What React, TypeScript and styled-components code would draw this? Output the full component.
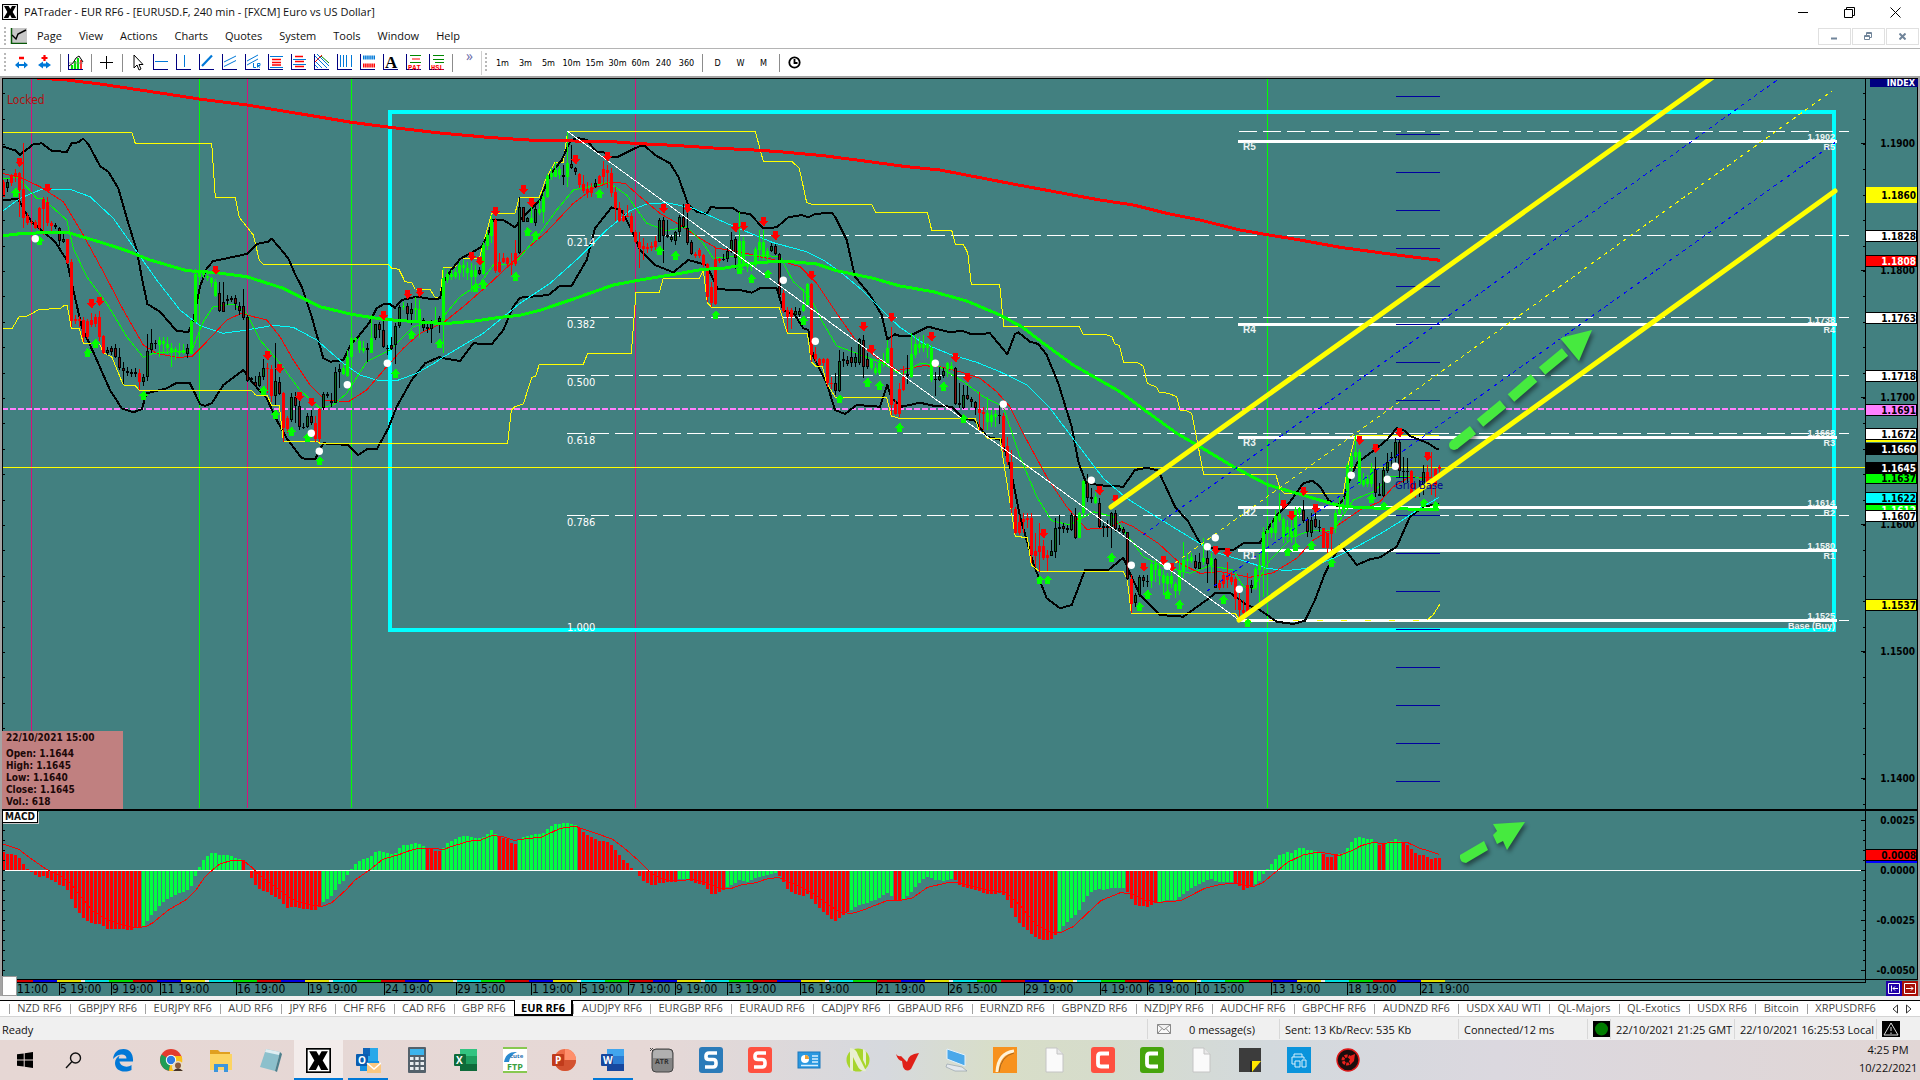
import React from "react";
import styled, { createGlobalStyle } from "styled-components";

/* ------------------------------------------------------------------ */
/* Theme                                                               */
/* ------------------------------------------------------------------ */

const UI = '"Open Sans", "Noto Sans", sans-serif';
const CHART = '"DejaVu Sans Condensed", "DejaVu Sans", sans-serif';
const TEAL = "#428080";

const GlobalStyle = createGlobalStyle`
  * { box-sizing: border-box; }
  body { margin: 0; background: #fff; font-family: ${UI}; font-size: 11px; color: #111; }
  button { font: inherit; color: inherit; background: none; border: 0; padding: 0; margin: 0; }
  svg { display: block; }
`;

/* ------------------------------------------------------------------ */
/* Chart data. Points are kept in thirds of a pixel from the origin    */
/* of the block they belong to.                                        */
/* ------------------------------------------------------------------ */

type Block = [number, number, string];

const toPoints = (blocks: Block[]) =>
  blocks
    .map(([ox, oy, pts]) =>
      pts
        .trim()
        .split(/\s+/)
        .map((p) => {
          const [x, y] = p.split(",").map(Number);
          return `${(ox + x / 3).toFixed(1)},${(oy + y / 3).toFixed(1)}`;
        })
        .join(" ")
    )
    .join(" ");

const slowRed = toPoints([
  [0, 80, "110,-6 200,0 300,12 400,27 500,42 598,57 740,75 850,93 1000,118 1054,127 1170,142 1320,159 1430,169"],
  [440, 80, "140,172 280,181 400,183 500,184 600,191 700,196 820,204 960,211 1040,217 1150,227 1280,244 1400,260 1500,270"],
  [900, 200, "350,-46 480,-22 600,0 700,15 800,40 900,60 1020,90 1102,104 1200,120 1320,142 1440,158 1530,170 1620,181"],
]);

const slowGreen = toPoints([
  [0, 80, "10,467 60,461 130,458 205,458 300,486 380,512 450,540 560,572 640,577 740,590 850,625 960,680 1054,703 1150,718 1250,725"],
  [440, 80, "10,731 100,724 180,712 240,706 300,691 400,657 520,615 600,600 720,580 790,568 850,565 950,548 1030,543 1130,552 1190,572 1300,595"],
  [900, 200, "0,258 100,275 200,303 300,345 370,383 430,430 520,495 660,575 720,620 830,700 900,740 1000,800 1102,854 1200,883 1300,912 1340,920 1440,925 1525,927 1618,927"],
]);

const bandUpper = toPoints([
  [0, 80, "10,200 48,212 60,224 100,193 125,190 155,212 200,216 215,190 235,187 250,176 265,192 300,258 325,275 355,325 385,430 410,510 425,590 442,672 480,695 530,753 565,756 580,720 600,620 620,565 640,543 680,535 740,522 770,492 805,485 815,476 840,505 865,535 885,582 905,620 935,710 970,835 992,845 1030,840 1054,790 1075,770 1110,725 1130,685 1150,673 1170,673 1185,683 1205,660 1250,650 1300,658 1320,655"],
  [440, 80, "10,610 30,575 60,537 100,515 125,500 145,460 160,420 190,420 225,442 245,415 260,400 300,360 330,285 365,240 390,185 410,173 440,180 470,217 490,216 510,230 535,230 570,212 600,198 615,198 645,225 690,250 715,290 745,375 770,395 800,402 812,382 880,385 900,398 930,402 970,445 1010,442 1045,412 1085,405 1105,412 1125,402 1175,398 1185,410 1220,480 1245,590 1290,645 1325,705 1342,778 1365,763"],
  [900, 200, "0,408 30,407 85,380 150,397 185,392 215,403 270,400 322,463 345,402 355,397 390,425 415,432 440,465 475,550 515,680 535,785 558,848 600,856 670,860 705,810 740,803 775,812 825,920 865,965 900,1030 940,1045 1000,1050 1030,1030 1080,1028 1095,1000 1130,945 1170,905 1210,850 1237,842 1260,860 1285,900 1310,918 1330,900 1345,850 1370,790 1430,745 1460,720 1490,685 1515,692 1530,708 1585,730 1610,747 1618,747"],
]);

const bandLower = toPoints([
  [0, 80, "10,360 55,357 75,395 95,425 130,455 165,485 200,540 220,630 245,740 285,828 330,930 365,985 400,997 425,988 440,940 500,925 530,908 570,910 600,972 615,978 635,970 670,915 730,870 755,905 800,955 830,1020 860,1075 905,1135 945,1138 970,1090 1045,1095 1075,1125 1100,1108 1130,1108 1165,1045 1190,980 1235,900 1275,850 1320,830"],
  [440, 80, "0,833 60,843 100,790 155,793 190,750 220,680 240,653 325,645 360,617 395,617 440,540 465,445 515,382 545,392 575,450 600,510 645,555 700,577 745,540 800,555 825,610 835,628 900,630 935,638 960,625 1010,625 1030,690 1065,705 1090,745 1105,750 1120,830 1160,910 1185,990 1215,1002 1250,975 1320,980 1342,915 1355,955 1385,980"],
  [900, 200, "60,608 100,617 155,620 190,655 225,662 260,710 305,720 330,800 360,950 400,1090 440,1195 480,1225 515,1215 555,1110 625,1110 670,1073 690,1120 720,1185 780,1245 850,1250 920,1200 945,1180 990,1178 1040,1215 1080,1230 1130,1265 1180,1272 1215,1262 1245,1200 1275,1120 1320,1035 1340,1055 1370,1095 1410,1078 1440,1072 1490,1040 1530,950 1570,920 1618,912"],
]);

const channelHigh = toPoints([
  [0, 80, "10,157 395,157 406,190 635,190 646,352 706,352 718,412 760,465 778,540 790,553 1165,553 1175,565 1197,568 1215,605 1235,608 1245,627 1290,628 1305,652 1320,652"],
  [440, 80, "10,562 45,562 60,535 118,535 155,400 225,400 238,352 298,352 320,290 345,247 370,247 383,154 946,154 970,244 1055,244 1078,265 1100,368 1115,373 1295,373 1307,397"],
  [900, 200, "82,37 95,91 155,91 166,133 190,133 203,158 214,253 299,253 311,379 538,379 550,403 615,403 635,410 645,432 658,436 671,487 710,487 730,498 742,550 770,562 778,577 805,580 830,590 840,630 860,632 875,640 911,823 1127,823 1140,865 1152,880 1330,880 1343,800 1366,707 1618,706"],
]);

const channelLow = toPoints([
  [0, 80, "10,745 37,745 58,709 82,708 118,688 180,686 192,677 202,677 214,745 238,745 250,790 298,790 310,818 335,830 370,915 406,917 418,931 755,931 766,945 802,947 815,977 838,977 850,1083 950,1083 960,1090"],
  [440, 80, "203,1090 214,990 225,980 250,972 275,893 287,888 298,853 430,853 443,820 574,820 588,637 658,637 670,595 778,595 790,570 802,668 815,682 1018,682 1042,760 1102,760 1114,845 1126,858 1147,860 1160,910 1186,952 1340,952 1354,1008 1378,1015"],
  [900, 200, "226,655 238,695 250,698 262,715 300,715 346,1010 382,1012 394,1095 418,1114 670,1114 682,1140 694,1240 1006,1240 1018,1262"],
]);

const cyanAverage = toPoints([
  [0, 80, "10,392 60,355 120,330 210,328 270,350 340,415 400,500 470,600 540,690 600,737 670,760 740,750 820,736 880,742 950,780 1030,850 1080,885 1130,900 1190,902 1250,880 1310,845"],
  [440, 80, "0,837 130,760 240,670 330,610 420,530 500,450 570,392 620,372 680,368 760,385 860,430 920,455 1000,488 1100,515 1150,540 1200,575 1260,625 1340,705"],
  [900, 200, "0,382 70,430 150,463 230,487 300,515 380,555 450,625 530,730 610,835 680,895 760,945 850,1000 940,1055 1030,1082 1100,1105 1160,1112 1220,1105 1300,1075 1370,1040 1440,1002 1500,965 1560,925 1618,892"],
]);

const fastRed = toPoints([
  [0, 80, "10,281 60,292 120,320 190,365 250,465 310,575 370,690 430,795 470,820 530,832 575,830 630,775 680,720 725,700 760,710 800,720 840,770 880,840 930,915 975,960 1045,965 1100,930 1160,860 1210,805 1260,760"],
  [440, 80, "10,728 70,680 150,610 240,525 320,455 400,370 460,325 510,307 555,310 600,350 660,400 720,435 780,475 830,505 900,515 960,530 1030,545 1080,560 1130,610 1190,700 1250,785 1320,840 1370,870"],
  [900, 200, "0,510 70,497 120,500 180,515 240,535 290,575 330,620 380,720 440,830 500,920 560,988 630,982 665,965 700,980 775,1030 840,1090 900,1120 960,1115 1050,1132 1120,1118 1190,1075 1240,1020 1300,985 1380,930 1440,905 1480,860 1530,830 1618,835"],
]);

const fastGreen = toPoints([
  [0, 80, "10,295 55,293 110,355 130,357 200,420 220,505 260,590 320,670 380,770 430,832 460,820 520,815 575,812 610,725 640,680 700,672 740,700 780,780 840,850 900,930 960,985 1000,975 1040,940 1100,845 1170,810 1240,740 1325,720"],
  [440, 80, "10,710 60,650 120,610 160,555 225,550 300,460 350,390 400,330 450,320 505,307 560,345 620,430 680,452 740,440 790,490 820,535 870,530 950,525 1020,530 1060,605 1110,650 1150,730 1190,798 1250,820 1330,850 1375,880"],
  [900, 200, "10,520 60,490 110,495 190,545 250,590 310,620 360,770 410,890 455,962 510,975 580,935 640,950 685,1010 730,1070 790,1100 870,1120 930,1097 1000,1110 1030,1160 1060,1165 1110,1080 1180,1010 1240,990 1300,990 1360,900 1420,875 1470,830 1530,828 1575,838"],
]);

/* One token per bar: kind, then high/top/bottom/low. */
const bars: [number, string][] = [
  [
    80,
    `r300/305/350/352 K298/306/323/335 r282/285/308/318 r268/280/290/305 r275/280/330/410 r190/328/413/445 r400/408/430/435 r420/425/430/435 r420/427/443/447 r380/383/445/450
     r352/357/388/465 r352/365/430/437 r422/430/438/452 K428/434/441/447 D440/443/482/497 K455/477/485/490 r478/478/550/552 r537/545/722/740 r706/718/724/732 r708/717/724/740
     r710/720/770/785 r718/723/770/778 r698/720/735/740 r703/710/732/742 r692/710/770/782 r765/768/818/822 K800/810/818/824 D797/803/816/825 D792/803/832/835 D805/832/865/870
     D845/865/873/912 D862/873/880/888 D868/877/881/890 D865/877/881/892 r868/880/905/930 K882/892/905/917 K763/812/892/902 K748/790/810/820 K780/789/793/808 g772/781/795/830
     g772/782/793/822 g772/793/805/822 g790/805/818/860 g800/808/815/840 g790/812/820/830 g793/810/820/822 K792/803/822/833 g720/723/822/822 g568/583/725/730 g570/577/590/600
     g572/578/585/595 g575/588/593/602 g590/595/610/620 g597/607/647/650 D605/640/692/695 D605/667/695/695 K645/657/663/675 K647/654/659/667 D645/655/672/690 D667/678/692/705
     D628/677/715/720 D705/710/903/905 D890/893/900/908 D888/905/917/922 K875/888/917/920 K838/863/890/900 r850/863/868/940 r855/867/948/965 K790/903/948/975 D890/905/942/945
     r935/940/1045/1085 r1008/1015/1047/1060 K938/950/1020/1025 D935/951/978/1030 D945/978/1042/1050 K1030/1040/1044/1047 K998/1007/1042/1045 D990/1007/1030/1035 r1008/1028/1077/1085 r985/988/1077/1087
     K935/942/985/990 K935/943/948/955 K940/962/968/980 K860/877/968/970 K853/866/877/925 g852/865/883/885 g810/831/887/890 g750/775/832/835 g770/775/780/785 g770/782/810/820
     g783/803/812/820 K790/804/810/845 g705/775/818/820 K732/733/775/780 D725/733/750/775 D720/751/800/805 D795/804/808/825 D770/796/806/810 K730/737/796/852 K675/680/738/745
     g665/677/682/690 D670/679/702/720 K668/688/702/735 g650/685/690/725 g660/687/722/775 K715/720/745/752 D730/742/748/760 K720/724/748/790 g680/720/725/730 K707/715/725/760
     g565/595/722/820 g570/583/600/610 g570/583/590/600 g565/577/590/597 g545/555/578/600 g540/555/565/590 g545/563/578/600 g550/570/592/635 g555/570/592/630 D560/570/583/585
     g485/495/583/585 g455/465/498/510 g405/420/468/490 r415/420/572/580 r520/545/575/580 r520/533/545/548 r530/533/553/565 r520/548/555/585 r480/520/552/557 K350/382/520/523
     D380/382/425/427 K412/415/425/427 g375/415/428/430 K375/388/428/437 g360/388/398/405 g335/352/395/428 g282/287/352/355 g260/280/292/300 g245/270/290/292 g258/268/285/298
     K255/286/290/315 g155/250/290/320 K195/253/265/268 D260/265/275/285 r280/283/315/325 r285/312/332/340 r305/328/338/355 r310/320/338/350 K298/310/322/325 r285/288/312/313
     r242/268/292/312 r255/270/280/325 r265/280/338/350 r322/337/385/422 r365/385/422/425 r390/407/422/425 r375/407/410/412 r400/407/457/460 r450/455/485/490 r455/485/505/563
     r473/497/508/540 r488/500/507/520 r487/497/503/512 r467/483/500/510 K415/420/485/487 D412/420/468/548 K420/466/472/475 K465/472/480/487 K453/455/482/495 K405/412/455/470
     D372/410/442/445 D395/443/488/495 D480/487/522/525 r517/522/527/533 r505/510/527/535 r522/525/555/560 r550/552/650/665 r605/622/670/680 r505/537/672/675 r533/537/543/550
     K523/537/540/543 K500/513/537/545 K455/480/515/520 D470/478/535/567 g395/483/565/570 g470/483/553/560 g540/553/560/575 g545/555/560/572 g500/507/555/560 g450/487/510/540
     g450/487/530/540 g505/513/530/542 K490/497/513/517 D493/497/523/525 D520/523/645/655 r630/640/692/700 r680/690/710/755 r683/690/710/747 K680/692/705/710 K685/692/705/710
     g628/675/692/695 g610/612/675/680 r608/612/825/845 r800/822/838/845 r833/838/855/857 r833/837/848/857 r835/838/910/920 r890/908/912/928 D880/908/932/945 K810/843/932/935
     K817/838/844/862 D828/840/851/857 D800/832/850/860 K820/832/850/860 K775/778/850/855 D765/780/860/893 D820/837/860/867 g835/838/865/870 g850/865/880/885 g835/850/880/885
     g820/845/850/860 g780/803/848/850 r740/803/975/1005 r960/972/1003/1005 r910/928/1003/1010`,
  ],
  [
    200,
    `r498/530/570/572 D465/523/527/553 g400/462/532/535 g405/433/465/475 g410/433/443/460 g405/433/443/455 g430/433/445/475 g435/443/540/545 K515/538/541/588 K500/528/541/543
     K505/512/528/535 g485/490/508/530 g487/497/507/510 D500/505/612/615 D550/608/615/625 K555/585/625/627 D558/585/598/600 D590/598/606/620 D603/607/625/645 r575/628/640/690
     r620/636/642/690 g590/640/667/690 g630/645/667/680 g630/643/650/680 K615/645/648/672 r640/647/740/755 r710/737/785/795 r750/785/925/940 r920/928/998/1002 r945/965/998/1005
     r940/957/967/1000 r940/953/960/985 r940/953/1065/1090 r1000/1053/1067/1100 r970/1037/1057/1115 r1020/1037/1075/1080 r1050/1065/1075/1112 K1020/1053/1067/1068 K955/983/1055/1075 K945/980/986/1035
     D970/978/986/1000 D975/983/990/1000 K940/945/990/993 D925/947/1013/1018 g935/938/1013/1015 g840/843/940/950 D822/845/895/905 D865/890/896/910 g880/890/910/913 D895/908/980/985
     D970/978/984/1010 D960/978/985/1010 K935/940/985/1043 D930/940/988/995 D975/985/992/1000 D980/987/998/1005 D995/997/1138/1140 r1125/1138/1213/1238 K1180/1185/1210/1220 K1125/1130/1185/1190
     D1125/1130/1142/1160 D1125/1142/1147/1160 g1080/1093/1143/1165 g1080/1093/1110/1145 g1090/1107/1127/1155 g1110/1125/1150/1185 g1120/1127/1152/1175 g1105/1127/1152/1165 g1145/1152/1173/1195 g1080/1113/1173/1185
     g1025/1080/1115/1135 g1060/1078/1083/1110 g1060/1070/1083/1090 D1065/1083/1105/1107 K1060/1085/1107/1107 g1015/1073/1085/1095 D1050/1075/1093/1150 g1060/1075/1095/1120 D1075/1078/1163/1165 r1140/1148/1163/1170
     r1120/1125/1152/1165 r1085/1125/1140/1165 r1115/1130/1145/1155 r1130/1138/1198/1230 r1170/1200/1230/1250 r1200/1230/1240/1250 r1120/1155/1240/1245 K1140/1155/1163/1180 g1100/1108/1165/1170 g1055/1095/1110/1205
     g980/995/1097/1190 g975/990/1000/1030 g960/985/998/1015 g930/947/1000/1020 g880/943/960/965 g950/958/1010/1030 g960/980/1010/1030 g960/985/1010/1030 g920/930/1010/1030 g920/925/940/955
     D900/930/962/970 D950/957/997/1010 K940/960/998/1010 D940/957/980/985 D960/980/985/995 r983/985/1043/1045 r998/1000/1043/1060 r980/982/1003/1060 g930/940/985/1000 g890/928/942/945
     g890/920/930/935 g790/795/920/925 g755/768/800/830 g705/755/772/780 g748/755/853/855 g820/838/855/860 g825/838/853/860 g790/807/853/860 D770/807/880/890 D850/882/888/888
     K800/810/887/890 K760/785/812/820 K755/770/773/800 K715/725/773/790 D720/727/813/835 D770/812/816/850 D775/813/817/850 r810/813/883/890 r850/873/880/895 K840/865/873/890
     K795/815/865/885 r795/815/852/860 r757/845/855/885 r805/808/855/890 r795/800/806/830`,
  ],
];

const candles = bars
  .flatMap(([oy, text]) =>
    text
      .trim()
      .split(/\s+/)
      .map((t) => ({
        kind: t[0],
        y: t
          .slice(1)
          .split("/")
          .map((v) => Math.round(oy + Number(v) / 3)),
      }))
  )
  .map((c, i) => ({ ...c, x: 3 + 4 * i }));

const sells = toPoints([
  [0, 80, "58,246 142,323 274,670 298,663 646,569 802,826 838,865 898,949 934,965 1150,706 1222,642 1258,636"],
  [440, 80, "94,528 118,542 166,394 250,328 274,367 406,238 502,229 670,385 742,384 886,442 910,438 970,424 1006,466 1114,586 1270,739 1294,808 1354,711"],
  [900, 200, "94,409 166,472 202,532 430,1000 598,871 646,897 730,1100 790,1080 814,1100 946,1050 982,1057 1150,912 1174,946 1210,873 1246,924 1378,720 1426,744 1498,697 1582,768"],
]).split(" ");

const buys = toPoints([
  [0, 80, "46,338 118,483 262,819 286,791 430,947 790,932 826,1004 874,1055 922,1073 958,1144 1186,881 1234,765 1318,791"],
  [440, 80, "106,623 130,614 226,590 262,456 286,467 478,341 658,512 706,527 826,706 898,570 934,597 982,583 1090,722 1198,958 1282,908 1318,917 1378,1043"],
  [900, 200, "130,560 190,657 418,1141 442,1141 634,1073 718,1221 742,1184 802,1184 838,1214 970,1199 1042,1270 1162,1057 1186,1042 1234,1037 1294,1090 1414,896 1450,919 1570,910 1606,918"],
]).split(" ");

const dots = toPoints([
  [0, 80, "106,476 934,1060 958,1114 1042,914 1162,850"],
  [440, 80, "1030,601 1126,784"],
  [900, 200, "106,490 310,613 574,841 694,1096 802,1099 922,1040 946,1013 1018,1168 1354,826 1462,838 1486,799"],
]).split(" ");

/* MACD curves: x runs at 1.633 units per pixel, y at 3 units per pixel. */
const macdBlocks = (a: string, b: string) =>
  [a, b].flatMap((text, i) =>
    text
      .trim()
      .split(/\s+/)
      .map((p) => {
        const [x, y] = p.split(",").map(Number);
        return [i * 960 + x / 1.6333, (i ? 780 : 720) + y / 3];
      })
  );

const histogram = macdBlocks(
  "5,396 12,402 25,405 32,414 38,432 45,448 52,459 65,471 72,467 78,474 85,480 97,495 105,498 111,515 117,543 124,568 130,581 137,598 143,605 150,611 163,613 175,626 190,628 215,629 222,623 235,618 241,602 247,585 254,570 261,555 273,537 286,525 293,520 306,508 313,495 319,465 325,441 332,420 339,407 345,399 352,399 358,405 371,406 378,408 385,414 391,417 397,420 404,455 410,475 417,495 423,507 430,513 437,516 443,526 450,531 456,537 463,555 469,563 482,560 495,568 515,569 521,558 528,546 541,528 547,510 554,492 560,483 567,465 573,447 580,431 593,417 606,409 613,396 619,392 632,400 639,402 645,399 652,384 658,376 672,373 678,369 684,373 691,378 697,384 710,392 717,393 723,384 730,369 743,357 750,351 763,347 776,355 789,351 796,342 802,330 809,342 815,347 828,358 835,371 841,372 848,356 854,351 861,348 874,342 887,340 893,326 900,318 906,312 926,309 933,312 940,315 946,325 953,337 960,346 972,358 979,362 992,367 998,375 1005,390 1012,408 1018,420 1025,431 1031,444 1038,455 1044,470 1051,483 1057,488 1064,495 1070,495 1077,488 1100,487 1110,477 1122,477 1130,485 1148,494 1156,510 1162,525 1175,516 1182,510 1188,500 1208,480 1220,486 1235,474 1254,464 1267,460 1273,468 1280,490 1286,508 1293,516 1306,527 1313,528 1319,522 1326,540 1332,554 1339,568 1345,578 1352,588 1358,597 1364,602 1371,594 1377,585 1384,576 1397,560 1410,552 1430,540 1449,518 1456,530 1462,540 1475,538 1482,528 1495,500 1508,477 1515,471 1528,480 1541,482 1554,477 1560,480 1567,498",
  "5,320 25,330 45,342 58,342 65,338 71,345 78,362 84,387 91,417 97,432 104,443 110,450 117,465 124,474 137,480 143,480 150,478 156,462 163,450 170,433 176,426 182,411 189,404 195,390 202,363 208,348 215,334 222,327 235,330 248,324 268,324 275,342 281,363 287,377 307,381 313,373 320,367 333,363 340,360 353,360 359,350 365,342 372,330 385,318 398,305 410,297 418,305 431,307 444,306 451,312 457,320 463,330 470,322 483,310 490,300 496,279 503,262 509,249 516,234 522,222 529,222 535,216 542,219 548,210 555,204 561,204 568,210 581,212 594,222 600,231 607,231 613,225 620,222 627,219 633,201 640,183 646,171 659,174 672,178 679,186 685,195 692,192 698,186 711,177 718,183 724,187 731,195 737,207 744,219 750,226 757,225 763,231 770,237 790,231"
);

const signal = macdBlocks(
  "5,372 30,387 50,415 75,447 100,468 115,490 130,525 150,570 170,595 200,615 222,623 238,620 250,608 275,570 305,538 320,510 335,470 350,445 360,431 380,421 397,421 410,440 425,467 450,500 470,530 490,548 525,560 542,548 565,510 580,480 605,448 625,418 650,405 670,391 685,385 710,386 725,388 740,378 765,364 785,360 803,347 820,349 840,361 860,356 885,351 915,325 940,319 965,335 1000,357 1020,385 1045,425 1065,462 1085,478 1105,483 1130,478 1155,490 1180,507 1195,505 1210,495 1235,488 1250,478 1272,472 1290,487 1310,502 1330,522 1350,550 1370,575 1390,581 1410,570 1450,541 1470,541 1490,534 1515,502 1550,487 1566,487",
  "0,310 40,328 75,337 100,380 125,435 150,458 165,457 185,440 205,405 230,362 262,338 280,341 300,360 325,367 360,362 400,325 425,313 450,310 480,320 495,307 515,277 535,247 560,225 585,216 620,226 640,212 655,197 675,187 690,191 705,187 730,187 750,204 783,223"
);

const valueAt = (x: number) => {
  const i = histogram.findIndex((p) => p[0] >= x);
  if (i <= 0) return histogram[0][1];
  const [x0, y0] = histogram[i - 1];
  const [x1, y1] = histogram[i];
  return y0 + ((y1 - y0) * (x - x0)) / (x1 - x0);
};

/* The histogram alternates red and green at these x positions. */
const turns = [141, 241, 320, 425, 441, 497, 516, 576, 676, 689, 725, 778, 849, 893, 901, 954, 1056, 1125, 1157, 1233, 1253, 1321, 1337, 1377, 1385, 1402];

const macdBars = candles.map(({ x }) => {
  const y = Math.round(valueAt(x));
  const n = turns.filter((t) => t <= x).length;
  return { x: x - 1, y, red: n % 2 === 0 };
});

/* ------------------------------------------------------------------ */
/* Chart drawing                                                       */
/* ------------------------------------------------------------------ */

const Plot = styled.svg`
  width: 100%;
  height: 100%;
  overflow: hidden;
  font-family: ${CHART};
  font-size: 11px;
`;

const fibs: [string, number][] = [
  ["0.214", 235],
  ["0.382", 317],
  ["0.500", 375],
  ["0.618", 433],
  ["0.786", 515],
];
const pivots: [string, string, number][] = [
  ["R5", "1.1902", 141],
  ["R4", "1.1738", 324],
  ["R3", "1.1668", 437],
  ["R2", "1.1614", 507],
  ["R1", "1.1580", 550],
  ["Base (Buy)", "1.1525", 620],
];
const minorTicks = Array.from({ length: 29 }, (_, i) => Math.round(93.2 + i * 25.4)).filter((y) => y < 808);

const Candle = ({ kind, x, y }: { kind: string; x: number; y: number[] }) => {
  const [hi, top, bottom, lo] = y;
  const h = Math.max(1, bottom - top);
  const fill = kind === "r" ? "#f00" : kind === "g" ? "#0f0" : "#000";
  return (
    <g fill={fill}>
      <rect x={x} y={hi} width={1} height={Math.max(1, lo - hi)} />
      <rect x={x - 1} y={top} width={3} height={h} />
      {(kind === "K" || kind === "D") && h > 2 && (
        <rect x={x} y={top + 1} width={1} height={h - 2} fill={kind === "K" ? "#0a6a1c" : "#7c0f0f"} />
      )}
    </g>
  );
};

const Line = ({ points, color, w = 1 }: { points: string; color: string; w?: number }) => (
  <polyline points={points} fill="none" stroke={color} strokeWidth={w} strokeLinejoin="round" />
);

const PricePlot = () => (
  <Plot aria-label="EURUSD price chart">
    <g transform="translate(-2 -79)" shapeRendering="crispEdges">
      <path d="M31.5 79V808M247.5 79V808M635.5 79V808" stroke="#d8107c" />
      <path d="M199.5 79V808M351.5 79V808M1267.5 79V808" stroke="#0f0" />
      <rect x={390} y={112} width={1444} height={518} fill="none" stroke="#0ff" strokeWidth={4} />
      {fibs.map(([t, y]) => (
        <path key={t} d={`M567 ${y + 0.5}H1849`} stroke="#fff" strokeDasharray="18 6" />
      ))}
      <path d="M1239 131.5H1849M1839 620.5H1849" stroke="#fff" strokeDasharray="18 6" />
      <path d="M2 467.5H1865" stroke="#ff0" />
      <path d="M2 409H1865" stroke="#ff80ff" strokeWidth={2} strokeDasharray="6 2" />
      {pivots.map(([n, , y]) => (
        <path key={n} d={`M1238 ${y + 0.5}H1837`} stroke="#fff" strokeWidth={3} />
      ))}
      <path d="M1245 620.5H1420" stroke="#ff0" strokeDasharray="6 18" />
      <polyline points="1427,620 1433,615 1440,604" fill="none" stroke="#ff0" />
      {Array.from({ length: 19 }, (_, i) => Math.round(96 + i * 38.06)).map((y) => (
        <path key={y} d={`M1396 ${y + 0.5}H1440`} stroke="#0000a0" />
      ))}
      <Line points={channelHigh} color="#ff0" />
      <Line points={bandUpper} color="#000" w={2} />
      <Line points={bandLower} color="#000" w={2} />
      <Line points={channelLow} color="#ff0" />
      <Line points={cyanAverage} color="#0ff" />
      <Line points={fastRed} color="#f00" />
      <Line points={fastGreen} color="#0f0" />
      {candles.map((c) => (
        <Candle key={c.x} {...c} />
      ))}
      <Line points={slowRed} color="#f00" w={3} />
      <Line points={slowGreen} color="#0f0" w={3} />
      <path d="M567 131L1239 620" stroke="#fff" />
      <path d="M1143 535L1780 78M1207 591L1836 142" stroke="#00f" strokeDasharray="4 4" />
      <path d="M1175 563L1832 91" stroke="#ff0" strokeDasharray="4 4" />
      {sells.map((p) => (
        <path key={p} transform={`translate(${p})`} d="M-2-4H3V0H5L.5 5L-4 0H-2Z" fill="#f00" />
      ))}
      {buys.map((p) => (
        <path key={p} transform={`translate(${p})`} d="M-2 4H3V0H5L.5-5L-4 0H-2Z" fill="#0f0" />
      ))}
      <g shapeRendering="auto" fill="#fff">
        {dots.map((p) => (
          <circle key={p} transform={`translate(${p})`} r={3.7} />
        ))}
      </g>
      <g fill="#000">
        <rect x={2} y={79} width={1} height={732} />
        <rect x={1865} y={79} width={1} height={732} />
        {minorTicks.map((y) => (
          <React.Fragment key={y}>
            <rect x={3} y={y} width={2} height={1} />
            <rect x={1863} y={y} width={2} height={1} />
          </React.Fragment>
        ))}
        {[143, 270, 397, 524, 651, 778].map((y) => (
          <rect key={y} x={1861} y={y} width={4} height={1} />
        ))}
        <rect x={2} y={809} width={1864} height={2} />
      </g>
    </g>
    <g transform="translate(-2 -79)">
      <g stroke="#ff0" strokeWidth={5} strokeLinecap="round">
        <path d="M1111 507L1713 77" />
        <path d="M1239 620L1835 191" />
      </g>
      <g fill="#fff">
        {fibs.map(([t, y]) => (
          <text key={t} x={567} y={y + 11}>
            {t}
          </text>
        ))}
        <text x={567} y={631}>
          1.000
        </text>
      </g>
      <g fill="#eef4f4" fontFamily='"Liberation Sans", sans-serif' fontWeight={700} fontSize={9}>
        {pivots.map(([n, v, y]) => (
          <React.Fragment key={n}>
            {n.length === 2 && (
              <text x={1243} y={y + 9} fontSize={10}>
                {n}
              </text>
            )}
            <text x={1835} y={y - 1} textAnchor="end">
              {v}
            </text>
            <text x={1835} y={y + 9} textAnchor="end">
              {n}
            </text>
          </React.Fragment>
        ))}
      </g>
      <text x={1395} y={489} fill="#000090">
        Grid Base
      </text>
      <text x={7} y={104} fill="#b01010" fontSize={12}>
        Locked
      </text>
      <g style={{ filter: "drop-shadow(2px 3px 2px rgba(0,0,0,.45))" }} fill="#46ea3f" stroke="#46ea3f">
        <g strokeWidth={10}>
          <circle cx={1454} cy={445} r={5} stroke="none" />
          <path d="M1454 445L1473 430M1480 423L1503 404M1511 398L1534 378M1542 371L1565 352" />
        </g>
        <path stroke="none" d="M1592 330L1560 338L1579 361Z" />
      </g>
    </g>
  </Plot>
);

const timeLabels: [number, string][] = [
  [59, "5 19:00"], [111, "9 19:00"], [160, "11 19:00"], [236, "16 19:00"], [308, "19 19:00"],
  [384, "24 19:00"], [456, "29 15:00"], [531, "1 19:00"], [580, "5 19:00"], [628, "7 19:00"],
  [675, "9 19:00"], [727, "13 19:00"], [800, "16 19:00"], [876, "21 19:00"], [948, "26 15:00"],
  [1024, "29 19:00"], [1100, "4 19:00"], [1147, "6 19:00"], [1195, "10 15:00"], [1271, "13 19:00"],
  [1347, "18 19:00"], [1420, "21 19:00"],
];

const stripe: [string, number][] = [["#d00000", 24], ["#0000e0", 24], ["#e0e000", 24], ["#e8e8e8", 4], ["#00e0e0", 24], ["#00d800", 24]];
const stripes = Array.from({ length: 12 }, (_, n) => {
  let x = 9 + n * 124;
  return stripe.map(([c, w]) => {
    const item = { c, x, w };
    x += w;
    return item;
  });
})
  .flat()
  .filter((s) => s.x < 1440);

const MacdPlot = () => (
  <Plot aria-label="MACD">
    <g transform="translate(-2 -811)" shapeRendering="crispEdges">
      {macdBars.map(({ x, y, red }) => (
        <rect
          key={x}
          x={x}
          y={Math.min(y, 870)}
          width={3}
          height={Math.max(1, Math.abs(y - 870))}
          fill={red ? "#f00" : "#00ff40"}
        />
      ))}
      <path d="M3 870.5H1865" stroke="#fff" />
      <polyline points={signal.map((p) => p.join()).join(" ")} fill="none" stroke="#f00" />
      <rect x={2} y={811} width={1} height={168} />
      <rect x={1865} y={811} width={1} height={172} />
      {Array.from({ length: 16 }, (_, i) => 820 + i * 10).map((y) => (
        <React.Fragment key={y}>
          <rect x={3} y={y} width={2} height={1} />
          <rect x={(y - 820) % 50 ? 1863 : 1861} y={y} width={(y - 820) % 50 ? 2 : 4} height={1} />
        </React.Fragment>
      ))}
      <rect x={2} y={979} width={1864} height={1} />
      {stripes.map((s) => (
        <rect key={s.x} x={s.x} y={980} width={s.w} height={2} fill={s.c} />
      ))}
      <rect x={2} y={982} width={1864} height={1} />
      {timeLabels.map(([x]) => (
        <rect key={x} x={x} y={983} width={1} height={12} />
      ))}
      <rect x={2} y={976} width={14} height={19} fill="#fff" stroke="#999" />
    </g>
    <g transform="translate(-2 -811)">
      <g fontSize={12}>
        <text x={17} y={993}>
          11:00
        </text>
        {timeLabels.map(([x, t]) => (
          <text key={x} x={x + 1} y={993}>
            {t}
          </text>
        ))}
      </g>
      <g style={{ filter: "drop-shadow(2px 3px 2px rgba(0,0,0,.45))" }} fill="#46ea3f">
        <path d="M1460 855L1484 841L1488 850L1466 863Q1459 862 1460 855Z" />
        <path d="M1525 822L1493 824L1497 831L1493 835L1497 844L1503 841L1507 850Z" />
      </g>
    </g>
  </Plot>
);

type Tag = { t: string; y: number; bg: string; fg?: string };
const tags: Tag[] = [
  { t: "1.1828", y: 236, bg: "#fff" },
  { t: "1.1808", y: 261, bg: "#f00", fg: "#fff" },
  { t: "1.1763", y: 318, bg: "#fff" },
  { t: "1.1718", y: 376, bg: "#fff" },
  { t: "1.1691", y: 410, bg: "#ff80ff" },
  { t: "1.1672", y: 434, bg: "#fff" },
  { t: "1.1660", y: 449, bg: "#000", fg: "#fff" },
  { t: "1.1637", y: 478, bg: "#0f0" },
  { t: "1.1645", y: 468, bg: "#000", fg: "#fff" },
  { t: "1.1622", y: 498, bg: "#0ff" },
  { t: "1.1612", y: 510, bg: "#0f0", fg: "#fff" },
  { t: "1.1607", y: 516, bg: "#fff" },
  { t: "1.1537", y: 605, bg: "#ff0" },
];

const AxisTag = ({ t, y, bg, fg = "#000" }: Tag) => (
  <g>
    <rect x={1865.5} y={y - 5.5} width={51} height={11} fill={bg} stroke="#000" />
    <text x={1916} y={y + 4} fill={fg}>
      {t}
    </text>
  </g>
);

const AxisPlot = styled(Plot)`
  font-size: 10px;
  font-weight: 700;
  text-anchor: end;
`;

const PriceAxis = () => (
  <AxisPlot aria-label="Price scale">
    <g transform="translate(-1865 -79)">
      {["1.1900", "1.1800", "1.1700", "1.1600", "1.1500", "1.1400"].map((t, i) => (
        <text key={t} x={1915} y={147 + i * 127}>
          {t}
        </text>
      ))}
      <rect x={1865} y={439} width={51} height={3} fill="#ff0" />
      {tags.map((t) => (
        <AxisTag key={t.t} {...t} />
      ))}
      <rect x={1863} y={187} width={55} height={16} fill="#ff0" />
      <text x={1916} y={199}>
        1.1860
      </text>
      <rect x={1870} y={79} width={48} height={8} fill="#000080" />
      <text x={1915} y={86} fill="#fff" fontSize={9}>
        INDEX
      </text>
      <path d="M1865 809.5H1918M1865 810.5H1918M1917.5 87V811M1865.5 79V811" stroke="#000" shapeRendering="crispEdges" />
    </g>
  </AxisPlot>
);

const MacdAxis = () => (
  <AxisPlot aria-label="MACD scale">
    <g transform="translate(-1865 -811)">
      {["0.0025", "0.0000", "-0.0025", "-0.0050"].map((t, i) => (
        <text key={t} x={1915} y={824 + i * 50}>
          {t}
        </text>
      ))}
      <rect x={1865} y={860} width={52} height={3} fill="#00f" />
      <AxisTag t="0.0008" y={855} bg="#f00" />
      <path d="M1865.5 811V983M1917.5 811V980M1865 979.5H1918" stroke="#000" shapeRendering="crispEdges" />
    </g>
  </AxisPlot>
);

/* ------------------------------------------------------------------ */
/* Window frame                                                        */
/* ------------------------------------------------------------------ */

const Page = styled.div`
  display: flex;
  flex-direction: column;
  min-height: 100vh;
  overflow: hidden;
`;

const TitleBar = styled.header`
  display: flex;
  align-items: center;
  height: 24px;
  padding: 0 2px;
  background: #fff;
`;

const Title = styled.h1`
  flex: 1;
  margin: 0 0 0 6px;
  font-size: 11px;
  line-height: 22px;
  font-weight: 400;
  white-space: nowrap;
`;

const CaptionButton = styled.button`
  display: grid;
  place-items: center;
  width: 46px;
  height: 20px;
`;

const MenuBar = styled.nav`
  display: flex;
  align-items: center;
  height: 25px;
  padding: 0 1px 0 4px;
  gap: 1px;
  border-bottom: 1px solid #b4b4b4;
`;

const Grip = styled.span`
  width: 3px;
  height: 19px;
  background: repeating-linear-gradient(#b8b8b8 0 2px, transparent 2px 4px) left / 2px 100% no-repeat;
`;

const MenuItem = styled.button`
  padding: 0 9px 0 8px;
  font-size: 11px;
  line-height: 22px;
`;

const MenuItems = styled.div`
  display: flex;
  flex: 1;
`;

const MdiButton = styled.button`
  display: grid;
  place-items: center;
  width: 33px;
  height: 17px;
  border: 1px solid #e0e0e0;
`;

const Toolbar = styled.div`
  display: flex;
  align-items: center;
  height: 27px;
  padding-left: 4px;
`;

const ToolGroup = styled.div<{ $lead?: number }>`
  display: flex;
  align-items: center;
  padding-left: ${(p) => p.$lead ?? 0}px;
`;

const ToolButton = styled.button`
  display: grid;
  place-items: center;
  width: 23px;
  height: 23px;
  font-family: ${CHART};
  font-size: 9px;
  color: #000;
`;

const Divider = styled.span`
  width: 8px;
  height: 18px;
  background: linear-gradient(#8c8c8c, #8c8c8c) center / 1px 100% no-repeat;
`;

const Overflow = styled.button`
  width: 26px;
  height: 24px;
  padding-left: 2px;
  border-right: 1px solid #d0d0d0;
  font-size: 14px;
  line-height: 10px;
  padding-bottom: 14px;
  color: #6a6aa8;
`;

const ChartWindow = styled.main`
  position: relative;
  flex: 1;
  display: grid;
  grid-template-columns: minmax(0, 1fr) 53px;
  grid-template-rows: minmax(400px, 1fr) 185px;
  border: solid #a4a4a4;
  border-width: 2px 2px 0;
  background: ${TEAL};
`;

const Cell = styled.section`
  position: relative;
  min-width: 0;
  min-height: 0;
`;

const TopCell = styled(Cell)`
  border-top: 1px solid #000;
`;

const InfoBox = styled.aside`
  position: absolute;
  left: 0;
  bottom: 2px;
  width: 121px;
  height: 78px;
  padding: 1px 4px;
  background: #c08080;
  font: 700 10px/12px ${CHART};
  color: #1c0808;
`;

const InfoTime = styled.p`
  margin: 0 0 4px;
`;

const InfoRow = styled.p`
  margin: 0;
`;

const Badge = styled.h2`
  position: absolute;
  left: 0;
  top: 0;
  margin: 0;
  padding: 0 2px;
  background: #fff;
  border: 1px solid #000;
  border-top: 0;
  box-shadow: 1px 1px 0 #c8c8c8;
  font: 700 10px/11px ${CHART};
`;

const ScrollButtons = styled.div`
  position: absolute;
  right: 0;
  bottom: 0;
  display: flex;
`;

const ScrollButton = styled.button<{ $bg: string }>`
  display: grid;
  place-items: center;
  width: 16px;
  height: 15px;
  background: ${(p) => p.$bg};
`;

const Tabs = styled.nav`
  display: flex;
  align-items: flex-start;
  height: 21px;
  background: linear-gradient(#f0f0f0 0 4px, #000 4px 5px, #fff 5px 20px, #d4d4d4 20px);
  padding: 4px 2px 0 9px;
`;

const Tab = styled.button<{ $active?: boolean }>`
  flex: 1 0 auto;
  height: 16px;
  padding: 0 8px;
  font-size: 11px;
  line-height: 16px;
  white-space: nowrap;
  color: ${(p) => (p.$active ? "#000" : "#4a4a4a")};
  font-weight: ${(p) => (p.$active ? 700 : 400)};
  background: ${(p) =>
    p.$active ? "#fff" : "linear-gradient(#a0a0a0, #a0a0a0) left 4px / 1px 10px no-repeat"};
  ${(p) => p.$active && "border: solid #000; border-width: 0 2px 2px 1px; line-height: 15px; padding: 0 6px;"}
`;

const TabArrows = styled.div`
  display: flex;
  gap: 8px;
  padding: 4px 6px 0 8px;
`;

const StatusBar = styled.footer`
  display: flex;
  align-items: center;
  height: 23px;
  padding: 1px 20px 0 2px;
  background: #f0f0f0;
  font-size: 11px;
  white-space: nowrap;
`;

const StatusCell = styled.span<{ $w: number }>`
  display: flex;
  align-items: center;
  gap: 16px;
  height: 20px;
  padding-left: 5px;
  flex: 0 0 ${(p) => p.$w}px;
  border-left: 1px solid #d8d8d8;
`;

const Ready = styled.span`
  flex: 1;
`;

const Taskbar = styled.footer`
  display: flex;
  height: 40px;
  padding-right: 3px;
  background: linear-gradient(90deg, #e6d7d4 0, #e6d8d6 34%, #d6d9de 46%, #d8dec8 52%, #d6dccb 57%, #d3d9dd 66%, #dbd8df 78%, #e1d6d5 100%);
`;

const TaskButton = styled.button<{ $open?: boolean; $active?: boolean }>`
  display: grid;
  place-items: center;
  width: 49px;
  height: 40px;
  ${(p) => p.$active && "background: #f3eceb;"}
  ${(p) => p.$active && "box-shadow: inset 0 -2px 0 #0078d7;"}
  ${(p) => p.$open && "background: linear-gradient(#0078d7, #0078d7) center bottom / 40px 2px no-repeat;"}
`;

const Clock = styled.time`
  margin-left: auto;
  width: 58px;
  padding-top: 1px;
  font-size: 11px;
  line-height: 18px;
  text-align: center;
  white-space: nowrap;
`;

/* ------------------------------------------------------------------ */
/* Icons                                                               */
/* ------------------------------------------------------------------ */

const AppX = ({ s }: { s: number }) => (
  <svg width={s} height={s} viewBox="0 0 24 24">
    <rect width="24" height="24" fill="#fff" />
    <rect x=".8" y=".8" width="22.4" height="22.4" fill="none" stroke="#000" strokeWidth="1.6" />
    <path d="M3 3H10L12.5 7.500L15 3H21L16 12L21.500 21H14.500L12 16L9.500 21H2.500L8 12Z" fill="#000" />
  </svg>
);

const axes = <path d="M1.500 0V15.500H16" stroke="#000080" strokeWidth="1" shapeRendering="crispEdges" />;
const B = "#0078d7";

const tool = (body: React.ReactNode) => (
  <svg width="17" height="17" viewBox="0 0 17 17" fill="none" stroke={B} strokeWidth="1">
    {body}
  </svg>
);

const toolIcons: Record<string, React.ReactNode> = {
  "Zoom out": tool(<><path d="M6 4H11" stroke="#f00" strokeWidth="2.500" /><path d="M2 11L6 7.500V14.500ZM15 11L11 7.500V14.500Z" fill={B} stroke="none" /><path d="M5 11H12" strokeWidth="2" /></>),
  "Zoom in": tool(<><path d="M5.500 4H11.500M8.500 1V7" stroke="#f00" strokeWidth="2.200" /><path d="M2 11L7 7.500V14.500ZM15 11L10 7.500V14.500Z" fill={B} stroke="none" /><path d="M6 11H11" strokeWidth="3" /></>),
  Histogram: tool(<><path d="M3 15V12L8 5L12 2L15 6V15Z" fill="#fff" stroke="none" /><path d="M5 15V11M8 15V7M11 15V4" stroke="#00e000" strokeWidth="2.200" /><path d="M14 15V6" stroke="#f00" strokeWidth="1.600" /><path d="M2 12L6 9L9 4L12 2L16 8" stroke="#000" />{axes}<path d="M2 9H16" stroke="#888" strokeWidth=".8" /></>),
  Crosshair: tool(<path d="M8.500 2V15M2 8.500H15" stroke="#000" />),
  Pointer: tool(<path d="M5 1V14L8 11L10 16L12 15L10 10.500H14Z" fill="#fff" stroke="#000" />),
  "Horizontal line": tool(<>{axes}<path d="M3 7.500H16" /></>),
  "Vertical line": tool(<>{axes}<path d="M9.500 1V13" /></>),
  "Trend line": tool(<>{axes}<path d="M4 12L14 1.500" strokeWidth="2.200" /></>),
  Channel: tool(<>{axes}<path d="M3 8L15 2M3 12.500L15 6.500" /></>),
  "Regression channel": tool(<>{axes}<path d="M3 7L14 1M3 11L14 5" /><path d="M9.500 9V13.500H12M13.500 13.500V9.500H16V11.500H13.500L16 13.500" /></>),
  Retracement: tool(<>{axes}<path d="M3 2.500H16M3 13.500H16" /><path d="M5 5.500H14M5 8.500H14M5 11H14" stroke="#f00" strokeWidth="1.300" /></>),
  Extension: tool(<>{axes}<path d="M5 2.500H13M5 7.500H14M5 12.500H14" stroke="#f00" strokeWidth="1.300" /><path d="M3 5.500H16M3 10.500H16" /></>),
  Fan: tool(<>{axes}<path d="M2 2L14 14M4 0L16 12M2 7L9 14M2 11L5 14" /><path d="M2 8L9 1" stroke="#f00" /><path d="M8 2L16 9" stroke="#080" /></>),
  "Time zones": tool(<>{axes}<path d="M4.500 1V13M7.500 1V13M10.500 1V13M15.500 1V13" /></>),
  Zone: tool(<>{axes}<path d="M4 3.500H16" strokeWidth="4" strokeDasharray="1.500 .6" /><path d="M4 11.500H16" stroke="#f00" strokeWidth="4" strokeDasharray="1.500 .6" /></>),
  Text: tool(<>{axes}<text x="3" y="14" fontFamily="Liberation Serif, serif" fontWeight="700" fontSize="17" fill="#000" stroke="none">A</text></>),
  "PAT levels": tool(<>{axes}<path d="M5 1.500H16M5 8.500H16" stroke="#080" /><path d="M7 5H15" stroke="#f00" /><text x="3" y="16" fontFamily="Liberation Mono, monospace" fontWeight="700" fontSize="7" fill="#f00" stroke="none">PAT</text></>),
  "HSL levels": tool(<>{axes}<path d="M5 1.500H16M5 5.500H16M7 8.500H16" stroke="#080" /><text x="3" y="16" fontFamily="Liberation Mono, monospace" fontWeight="700" fontSize="7" fill="#f00" stroke="none">HSL</text></>),
};

const ToolBtn = ({ name }: { name: string }) => (
  <ToolButton aria-label={name}>{toolIcons[name]}</ToolButton>
);

const task = (body: React.ReactNode) => (
  <svg width="26" height="26" viewBox="0 0 26 26">
    {body}
  </svg>
);

const letter = (t: string, x: number, y: number, size = 10, fill = "#fff") => (
  <text x={x} y={y} fontFamily="Open Sans, sans-serif" fontWeight="700" fontSize={size} fill={fill}>
    {t}
  </text>
);

const office = (t: string, dark: string, mid: string, light: string) =>
  task(
    <>
      <rect x="7" y="2" width="17" height="22" rx="1.500" fill={mid} />
      <rect x="7" y="2" width="17" height="7" fill={light} />
      <rect x="7" y="17" width="17" height="7" fill={dark} />
      <rect x="1" y="7" width="12" height="12" rx="1" fill={dark} />
      {letter(t, 3, 17)}
    </>
  );

const sheet = task(<><path d="M5 1H16L22 7V25H5Z" fill="#fafafa" stroke="#c4c4c4" /><path d="M16 1V7H22" fill="#e8e8e8" stroke="#c4c4c4" /></>);
const snag = (c: string) =>
  task(<><rect x="1" y="0" width="24" height="26" rx="3" fill={c} /><path d="M19 6H11Q8 6 8 9V10Q8 12.500 11 12.500H15Q18 12.500 18 15.500V17Q18 20 15 20H7" fill="none" stroke="#fff" strokeWidth="3.600" /></>);
const cam = (c: string) =>
  task(<><rect x="1" y="0" width="24" height="26" rx="3" fill={c} /><path d="M19 6.500H11Q8 6.500 8 9.500V16.500Q8 19.500 11 19.500H19" fill="none" stroke="#fff" strokeWidth="3.800" /></>);

const tasks: [string, React.ReactNode][] = [
  ["Start", <svg width="16" height="16" viewBox="0 0 16 16"><path d="M0 2.300L6.700 1.400V7.500H0ZM7.700 1.200L16 0V7.500H7.700ZM0 8.500H6.700V14.600L0 13.700ZM7.700 8.500H16V16L7.700 14.800Z" /></svg>],
  ["Search", <svg width="17" height="17" viewBox="0 0 17 17" fill="none" stroke="#111" strokeWidth="1.400"><circle cx="10.500" cy="6" r="5" /><path d="M7 9.500L1 16" /></svg>],
  ["Edge", task(<path d="M3 12C4 5 8 2 13.500 2C20 2 23.500 7 23 14.500H9.500C10 19 17 21.500 21.500 18V23C14 26.500 5 24 5 16C5 12.500 7 10 10 8.500C9 9.500 8.800 10.500 8.800 11.500H16.500C16.500 6.500 9 5.500 3 12Z" fill="#0078d7" />)],
  ["Chrome", task(<><circle cx="12" cy="13" r="11" fill="#e33b2e" /><path d="M12 13L2.500 7.500A11 11 0 0 0 10 23.800Z" fill="#1f9d55" /><path d="M12 13L10 23.800A11 11 0 0 0 22.500 9H14Z" fill="#fbc116" /><circle cx="12" cy="13" r="5.200" fill="#fff" /><circle cx="12" cy="13" r="4.200" fill="#2f7de1" /><circle cx="19" cy="20" r="6" fill="#e8dccb" /><circle cx="19" cy="18.500" r="3" fill="#8b5a3c" /><path d="M14 24Q19 18.500 24 24Z" fill="#463128" /></>)],
  ["Explorer", task(<><path d="M2 3H10L12 5H22V10H2Z" fill="#e0a020" /><path d="M2 7H24V23H2Z" fill="#fcd462" /><path d="M6 25V17H20V25H16V20H10V25Z" fill="#3c96dc" /></>)],
  ["Notepad", task(<><path d="M9 2L23 5L18 24L3 20Z" fill="#8cc0cc" /><path d="M9 2L23 5L22 8L8 5Z" fill="#dfeef2" /><path d="M23 5L25 7L20 25L18 24Z" fill="#4d7f8c" /></>)],
  ["PATrader", <AppX s={25} />],
  ["Outlook", task(<><rect x="8" y="1" width="15" height="17" fill="#28a8ea" /><rect x="8" y="1" width="7" height="8" fill="#0f64b8" /><rect x="5" y="14" width="19" height="10" fill="#1490df" /><rect x="1" y="7" width="12" height="12" rx="1" fill="#0a5db0" />{letter("O", 3, 17)}<rect x="12" y="16" width="14" height="10" fill="#fbc880" /><path d="M12 16L19 22L26 16" fill="none" stroke="#fff" strokeWidth="1.500" /></>)],
  ["Calculator", task(<><rect x="4" y="0" width="18" height="26" rx="1" fill="#54616b" /><rect x="6" y="2" width="14" height="6" fill="#3db4ec" /><path d="M6 11.500H20M6 16.500H20M6 21.500H20" stroke="#e8edf0" strokeWidth="3" strokeDasharray="3.500 1.750" /></>)],
  ["Excel", office("X", "#0e6b3a", "#1f9e5f", "#33c481")],
  ["FTP", task(<><rect x="1" y="0" width="24" height="26" fill="#fff" /><path d="M1 1H25M1 25H25" stroke="#88c850" strokeWidth="2" /><path d="M2 15Q4 4 15 5Q8 8 7 15Z" fill="#2a8ad0" />{letter("cute", 8, 11, 6, "#2a72b0")}{letter("FTP", 5, 23, 9, "#3aa040")}</>)],
  ["PowerPoint", task(<><circle cx="14" cy="13" r="11" fill="#ed6c47" /><path d="M14 2A11 11 0 0 1 25 13H14Z" fill="#ff8f6b" /><path d="M3 13H25A11 11 0 0 1 3 13Z" fill="#d35230" /><rect x="1" y="7" width="12" height="12" rx="1" fill="#c13b1b" />{letter("P", 4, 17)}</>)],
  ["Word", office("W", "#17479e", "#2b7cd3", "#41a5ee")],
  ["ATR", task(<><rect x="3" y="2" width="21" height="23" rx="4" fill="#858585" stroke="#444" /><path d="M7 3H20Q23 3 23 7V11H4V7Q4 3 7 3Z" fill="#b0b0b0" /><path d="M1 1L4 4M4 1L1 4" stroke="#444" />{letter("ATR", 6, 17, 7, "#333")}</>)],
  ["Snagit", snag("#2b7bb9")],
  ["Snagit Editor", snag("#ff5040")],
  ["Contacts", task(<><rect x="2" y="5" width="22" height="16" fill="#2a98e0" stroke="#1c78bc" /><circle cx="9" cy="12" r="4" fill="#fff" /><path d="M9 12V8A4 4 0 0 1 13 12Z" fill="#f0a030" /><path d="M16 9H22M16 12H22M16 15H22M5 18.500H22" stroke="#d8f0ff" strokeWidth="1.400" /></>)],
  ["Nitro", task(<><circle cx="13" cy="13" r="11.500" fill="#a8d52c" /><path d="M5 1Q11 1 13 8L21 24Q15 25 12 18L8 10V24Q5 24 5 22ZM18 2Q21 3 21 6V19L18 13Z" fill="#e9efd0" /></>)],
  ["Bird", task(<path d="M2 7Q4 10 7 9L13 15Q14 7 25 6L17 22Q12 26 9 20L8 14Q4 14 2 7Z" fill="#e02018" />)],
  ["Remote PC", task(<><path d="M4 2L22 8V19L4 12Z" fill="#4aa8ea" stroke="#e4f2fc" /><path d="M4 17L19 20L24 24H12L3 20Z" fill="#e4e8ec" stroke="#8c98a4" strokeWidth=".6" /></>)],
  ["Curve", task(<><rect x="1" y="0" width="24" height="26" fill="#f7921e" /><path d="M5 25Q6 6 22 4" fill="none" stroke="#fff3d8" strokeWidth="3" /><path d="M7 25Q9 9 22 6" fill="none" stroke="#a86820" strokeWidth="1" /></>)],
  ["Document 1", sheet],
  ["Camtasia", cam("#ff5040")],
  ["Camtasia Recorder", cam("#46a40c")],
  ["Document 2", sheet],
  ["Notes", task(<><path d="M2 1H24V25H2Z" fill="#3c3c3c" /><path d="M13 14H24L15 25Z" fill="#ffe600" /><path d="M13 14H15V25H13Z" fill="#222" /></>)],
  ["Printer", task(<><rect x="1" y="0" width="24" height="26" fill="#0a94dc" /><path d="M8 10V7H16V10M6 17V10H18V12M9 14H14V20H9ZM6 17H9M16 13H20V20H16Z" fill="none" stroke="#d8f0fc" /></>)],
  ["Gear", task(<><circle cx="13" cy="13" r="11" fill="#1c0d0d" stroke="#e01818" strokeWidth="1.400" /><circle cx="12" cy="13" r="4" fill="none" stroke="#e8201c" strokeWidth="3" strokeDasharray="3 1" /><path d="M15 9L20 7L19 14L15 18Z" fill="#e8201c" /></>)],
];

const tabNames = [
  "NZD RF6", "GBPJPY RF6", "EURJPY RF6", "AUD RF6", "JPY RF6", "CHF RF6", "CAD RF6", "GBP RF6", "EUR RF6",
  "AUDJPY RF6", "EURGBP RF6", "EURAUD RF6", "CADJPY RF6", "GBPAUD RF6", "EURNZD RF6", "GBPNZD RF6",
  "NZDJPY RF6", "AUDCHF RF6", "GBPCHF RF6", "AUDNZD RF6", "USDX XAU WTI", "QL-Majors", "QL-Exotics",
  "USDX RF6", "Bitcoin", "XRPUSDRF6",
];

const drawTools = [
  "Pointer", "Horizontal line", "Vertical line", "Trend line", "Channel", "Regression channel", "Retracement",
  "Extension", "Fan", "Time zones", "Zone", "Text", "PAT levels", "HSL levels",
];

/* ------------------------------------------------------------------ */

export default function App() {
  return (
    <Page>
      <GlobalStyle />
      <TitleBar>
        <AppX s={16} />
        <Title>PATrader - EUR RF6 - [EURUSD.F, 240 min - [FXCM] Euro vs US Dollar]</Title>
        <CaptionButton aria-label="Minimize">
          <svg width="11" height="11"><path d="M0 5.500H10" stroke="#000" /></svg>
        </CaptionButton>
        <CaptionButton aria-label="Restore">
          <svg width="11" height="11" fill="none" stroke="#000"><path d="M.5 2.500H8.500V10.500H.5ZM2.500 2V.5H10.500V8.500H9" /></svg>
        </CaptionButton>
        <CaptionButton aria-label="Close">
          <svg width="11" height="11" stroke="#000"><path d="M.5.5L10.500 10.500M10.500.5L.5 10.500" /></svg>
        </CaptionButton>
      </TitleBar>

      <MenuBar>
        <Grip />
        <svg width="20" height="16" viewBox="-3 0 20 16">
          <rect width="16" height="16" fill="#c8c8c8" />
          <path d="M.5 0V15.500H16" fill="none" stroke="#085808" strokeWidth="1.500" />
          <path d="M1 7L5 11L7 6L15 2" fill="none" stroke="#000" strokeWidth="1.400" />
        </svg>
        <MenuItems>
          {["Page", "View", "Actions", "Charts", "Quotes", "System", "Tools", "Window", "Help"].map((m) => (
            <MenuItem key={m}>{m}</MenuItem>
          ))}
        </MenuItems>
        <MdiButton aria-label="Minimize chart">
          <svg width="7" height="7"><path d="M0 5.500H6" stroke="#71859a" strokeWidth="2" /></svg>
        </MdiButton>
        <MdiButton aria-label="Restore chart">
          <svg width="9" height="9" fill="none" stroke="#71859a"><path d="M.5 3.500H5.500V7.500H.5ZM.5 4.500H5.500M2.500 3V.5H7.500V5.500H6M2.500 1.500H7.500" /></svg>
        </MdiButton>
        <MdiButton aria-label="Close chart">
          <svg width="7" height="7" stroke="#71859a" strokeWidth="2"><path d="M.5.5L6.500 6.500M6.500.5L.5 6.500" /></svg>
        </MdiButton>
      </MenuBar>

      <Toolbar>
        <Grip />
        <ToolGroup $lead={3}>
          <ToolBtn name="Zoom out" />
          <ToolBtn name="Zoom in" />
          <Divider />
          <ToolBtn name="Histogram" />
          <Divider />
          <ToolBtn name="Crosshair" />
          <Divider />
          {drawTools.map((n) => (
            <ToolBtn key={n} name={n} />
          ))}
          <Divider />
          <Overflow aria-label="More tools">»</Overflow>
        </ToolGroup>
        <ToolGroup $lead={3}>
          <Grip />
          <ToolGroup $lead={3}>
            {["1m", "3m", "5m", "10m", "15m", "30m", "60m", "240", "360"].map((t) => (
              <ToolButton key={t}>{t}</ToolButton>
            ))}
            <Divider />
            {["D", "W", "M"].map((t) => (
              <ToolButton key={t}>{t}</ToolButton>
            ))}
            <Divider />
            <ToolButton aria-label="Clock">
              <svg width="13" height="13" fill="none" stroke="#000" strokeWidth="1.800">
                <circle cx="6.500" cy="6.500" r="5.200" />
                <path d="M6.500 3V7H9.500" />
              </svg>
            </ToolButton>
          </ToolGroup>
        </ToolGroup>
      </Toolbar>

      <ChartWindow>
        <TopCell>
          <PricePlot />
          <InfoBox>
            <InfoTime>22/10/2021 15:00</InfoTime>
            <InfoRow>Open: 1.1644</InfoRow>
            <InfoRow>High: 1.1645</InfoRow>
            <InfoRow>Low: 1.1640</InfoRow>
            <InfoRow>Close: 1.1645</InfoRow>
            <InfoRow>Vol.: 618</InfoRow>
          </InfoBox>
        </TopCell>
        <TopCell>
          <PriceAxis />
        </TopCell>
        <Cell>
          <MacdPlot />
          <Badge>MACD</Badge>
        </Cell>
        <Cell>
          <MacdAxis />
          <ScrollButtons>
            <ScrollButton $bg="#2000a8" aria-label="Scroll back">
              <svg width="12" height="11" fill="none" stroke="#fff"><path d="M.5.5H11.500V10.500H.5ZM3.500 2.500V8.500M10 5.500H5M7 3.500L5 5.500L7 7.500" /></svg>
            </ScrollButton>
            <ScrollButton $bg="#a81008" aria-label="Scroll forward">
              <svg width="12" height="11" fill="none" stroke="#fff"><path d="M.5.5H11.500V10.500H.5ZM2 5.500H9M7 3.500L9 5.500L7 7.500" /></svg>
            </ScrollButton>
          </ScrollButtons>
        </Cell>
      </ChartWindow>

      <Tabs>
        {tabNames.map((t) => (
          <Tab key={t} $active={t === "EUR RF6"}>
            {t}
          </Tab>
        ))}
        <TabArrows>
          <button aria-label="Previous tabs">
            <svg width="6" height="10" fill="none" stroke="#333"><path d="M5.500 1V9L1 5Z" /></svg>
          </button>
          <button aria-label="Next tabs">
            <svg width="6" height="10" fill="none" stroke="#333"><path d="M.5 1V9L5 5Z" /></svg>
          </button>
        </TabArrows>
      </Tabs>

      <StatusBar>
        <Ready>Ready</Ready>
        <StatusCell $w={132}>
          <svg width="20" height="12" viewBox="-4 0 20 12" fill="#fafafa" stroke="#888"><path d="M.5 1.500H13.500V10.500H.5ZM.5 1.500L7 7L13.500 1.500M.5 10.500L5 5.500M13.500 10.500L9 5.500" /></svg>
          0 message(s)
        </StatusCell>
        <StatusCell $w={179}>Sent: 13 Kb/Recv: 535 Kb</StatusCell>
        <StatusCell $w={129}>Connected/12 ms</StatusCell>
        <StatusCell $w={22}>
          <svg width="17" height="16"><rect width="17" height="16" /><circle cx="8.500" cy="8" r="6.500" fill="#007c00" /></svg>
        </StatusCell>
        <StatusCell $w={124}>22/10/2021 21:25 GMT</StatusCell>
        <StatusCell $w={142}>22/10/2021 16:25:53 Local</StatusCell>
        <StatusCell $w={24}>
          <svg width="18" height="16" fill="none" stroke="#ddd"><rect width="18" height="16" fill="#000" stroke="none" /><path d="M9 2L16 14H2ZM9 6V10M9 11.500V13" /></svg>
        </StatusCell>
      </StatusBar>

      <Taskbar>
        {tasks.map(([name, icon]) => (
          <TaskButton
            key={name}
            aria-label={name}
            $active={name === "PATrader"}
            $open={name === "Outlook" || name === "Word"}
          >
            {icon}
          </TaskButton>
        ))}
        <Clock>
          4:25 PM
          <br />
          10/22/2021
        </Clock>
      </Taskbar>
    </Page>
  );
}
